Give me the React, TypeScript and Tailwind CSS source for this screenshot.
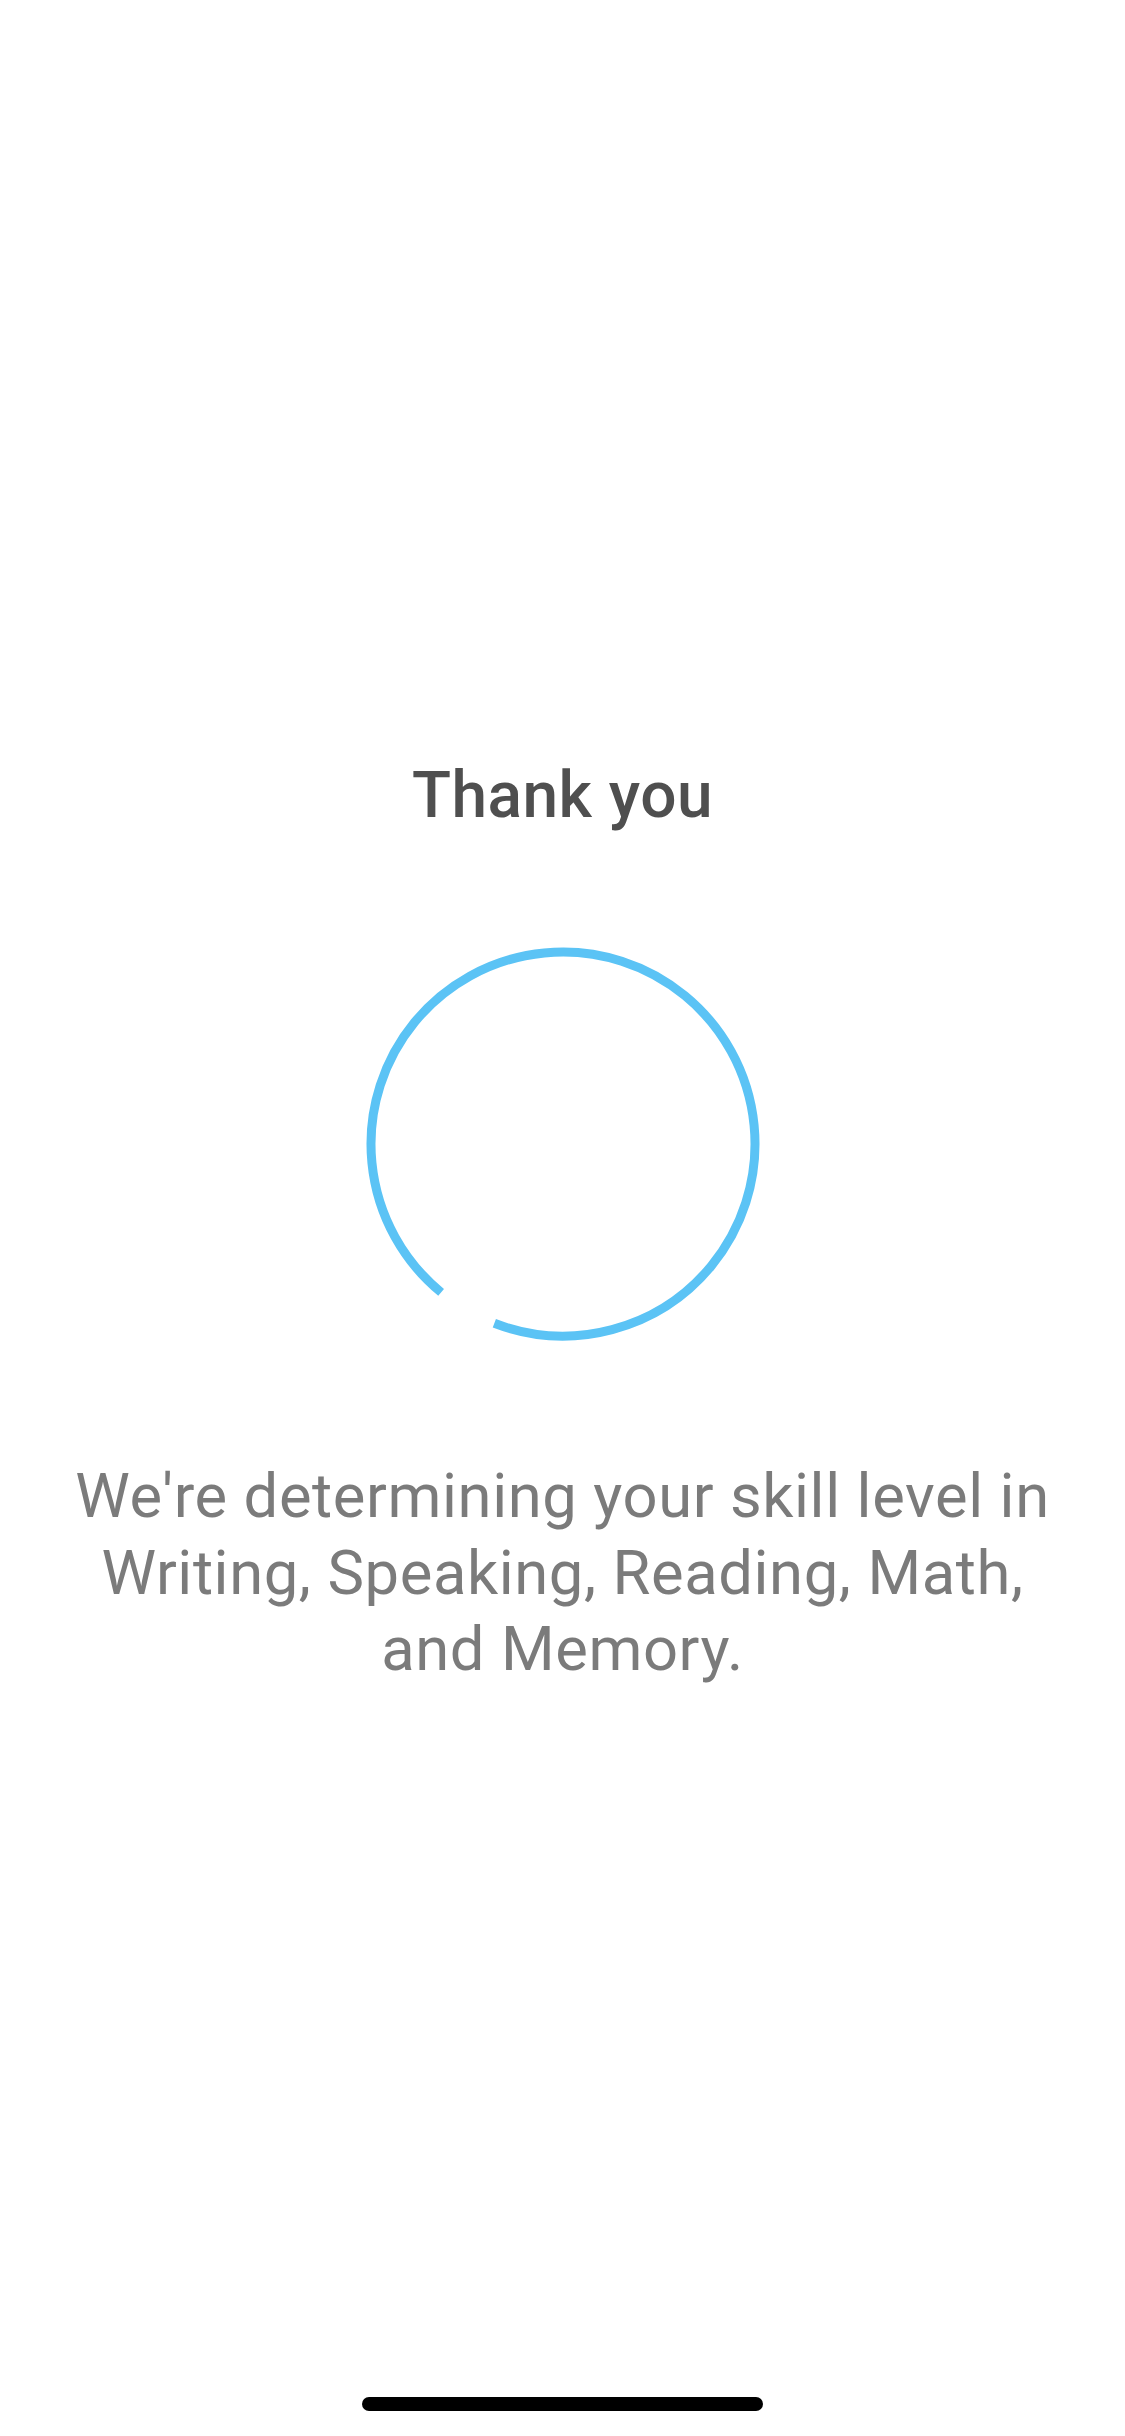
import React from "react";

export default function App() {
  const r = 192;
  const c = 2 * Math.PI * r;
  const arc = (341.4 / 360) * c;
  return (
    <div className="relative w-[1125px] h-[2436px] bg-white flex flex-col items-center pt-[756px] font-['Roboto',sans-serif]">
      <h1 className="text-[64px] leading-[80px] font-medium text-[#4f4f4f] tracking-[0.5px]">Thank you</h1>
      <svg width="400" height="400" viewBox="0 0 400 400" className="mt-[108px]">
        <circle
          cx="200"
          cy="200"
          r={r}
          fill="none"
          stroke="#5bc3f5"
          strokeWidth="9"
          strokeDasharray={`${arc} ${c}`}
          transform="rotate(129.4 200 200)"
        />
      </svg>
      <p className="mt-[114px] text-[61.5px] leading-[76.5px] text-[#7b7b7b] text-center tracking-[0.6px]">
        <span className="block">We're determining your skill level in</span>
        <span className="block">Writing, Speaking, Reading, Math,</span>
        <span className="block">and Memory.</span>
      </p>
      <div className="absolute bottom-[25px] left-[362px] w-[401px] h-[14px] rounded-full bg-black" />
    </div>
  );
}
